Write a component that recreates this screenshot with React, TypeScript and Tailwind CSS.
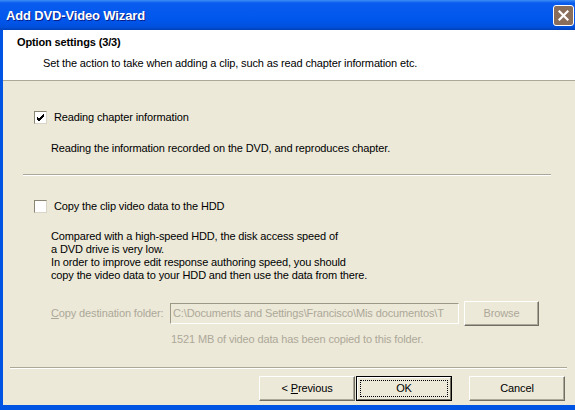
import React from 'react';

const font = { fontFamily: 'Tahoma, "Liberation Sans", Arial, sans-serif' };

function CheckBox({ checked }: { checked: boolean }) {
  return (
    <div className="w-[13px] h-[13px] shrink-0 bg-white border border-t-[#8a8472] border-l-[#8a8472] border-b-[#d8d4c8] border-r-[#d8d4c8] flex items-center justify-center">
      {checked && (
        <svg width="9" height="9" viewBox="0 0 9 9">
          <path d="M1 4 L3 6 L8 1 M1 5 L3 7 L8 2 M1 6 L3 8 L8 3" stroke="#000" strokeWidth="1" fill="none" shapeRendering="crispEdges" />
        </svg>
      )}
    </div>
  );
}

function Button({ children, focused, disabled }: { children: React.ReactNode; focused?: boolean; disabled?: boolean }) {
  if (focused) {
    return (
      <div className="w-[96px] h-[25px] border border-black">
        <div className="w-full h-full border border-t-white border-l-white border-b-[#716f64] border-r-[#716f64] flex items-center justify-center p-[2px]">
          <div className="w-full h-full border border-dotted border-black flex items-center justify-center">{children}</div>
        </div>
      </div>
    );
  }
  return (
    <div
      className={`h-[25px] border border-t-white border-l-white border-b-[#716f64] border-r-[#716f64] shadow-[inset_-1px_-1px_0_#aca899] flex items-center justify-center ${
        disabled ? 'w-[75px] text-[#aca899]' : 'w-[96px]'
      }`}
    >
      {children}
    </div>
  );
}

export default function App() {
  return (
    <div className="w-[575px] h-[410px] bg-[#0054e3] flex flex-col overflow-hidden text-[11px] leading-[13px] tracking-[-0.13px] text-black" style={font}>
      {/* title bar */}
      <div className="h-[30px] shrink-0 flex items-center justify-between pl-[6px] pr-[1px] bg-[linear-gradient(to_bottom,#3d8ef5_0px,#0a5cef_3px,#0056ec_20px,#0050dc_27px,#0040b8_30px)]">
        <span className="text-white font-bold text-[13px] [text-shadow:1px_1px_0_#0a1e8a] tracking-[-0.15px]" style={{ fontFamily: '"Trebuchet MS", "Liberation Sans", sans-serif' }}>
          Add DVD-Video Wizard
        </span>
        <div className="w-[21px] h-[21px] rounded-[3px] border border-white bg-[#8a6e5c] flex items-center justify-center">
          <svg width="11" height="11" viewBox="0 0 11 11">
            <path d="M1.5 1.5 L9.5 9.5 M9.5 1.5 L1.5 9.5" stroke="#fff" strokeWidth="2.2" strokeLinecap="square" />
          </svg>
        </div>
      </div>

      {/* dialog body */}
      <div className="flex-1 ml-[3px] mb-[5px] bg-[#ece9d8] flex flex-col">
        {/* header */}
        <div className="h-[51px] shrink-0 bg-white border-b border-[#aca899] flex flex-col pt-[6px]">
          <div className="pl-[14px] font-bold">Option settings (3/3)</div>
          <div className="pl-[40px] mt-[8px]">Set the action to take when adding a clip, such as read chapter information etc.</div>
        </div>

        {/* chapter option */}
        <div className="mt-[30px] ml-[31px] flex items-center gap-[7px]">
          <CheckBox checked />
          <span>Reading chapter information</span>
        </div>
        <div className="mt-[18px] ml-[48px]">Reading the information recorded on the DVD, and reproduces chapter.</div>

        <div className="mt-[19px] ml-[20px] mr-[24px] h-[2px] border-t border-[#aca899] border-b border-b-white" />

        {/* copy option */}
        <div className="mt-[24px] ml-[31px] flex items-center gap-[7px]">
          <CheckBox checked={false} />
          <span>Copy the clip video data to the HDD</span>
        </div>
        <div className="mt-[17px] ml-[48px]">
          <p>Compared with a high-speed HDD, the disk access speed of</p>
          <p>a DVD drive is very low.</p>
          <p>In order to improve edit response authoring speed, you should</p>
          <p>copy the video data to your HDD and then use the data from there.</p>
        </div>

        <div className="mt-[19px] ml-[48px] flex items-center text-[#aca899]">
          <span className="w-[119px]">
            <u>C</u>opy destination folder:
          </span>
          <div className="w-[289px] h-[21px] border border-t-[#9d9885] border-l-[#9d9885] border-b-white border-r-white flex items-center pl-[2px] overflow-hidden whitespace-nowrap">
            C:\Documents and Settings\Francisco\Mis documentos\T
          </div>
          <div className="ml-[5px]">
            <Button disabled>Browse</Button>
          </div>
        </div>
        <div className="mt-[7px] ml-[168px] text-[#aca899]">1521 MB of video data has been copied to this folder.</div>

        <div className="mt-[21px] ml-[7px] mr-[8px] h-[2px] border-t border-[#aca899] border-b border-b-white" />

        {/* buttons */}
        <div className="mt-[7px] mr-[10px] flex justify-end items-center">
          <Button>
            &lt; <u className="ml-[3px]">P</u>revious
          </Button>
          <div className="ml-px">
            <Button focused>OK</Button>
          </div>
          <div className="ml-[17px]">
            <Button>Cancel</Button>
          </div>
        </div>
      </div>
    </div>
  );
}
